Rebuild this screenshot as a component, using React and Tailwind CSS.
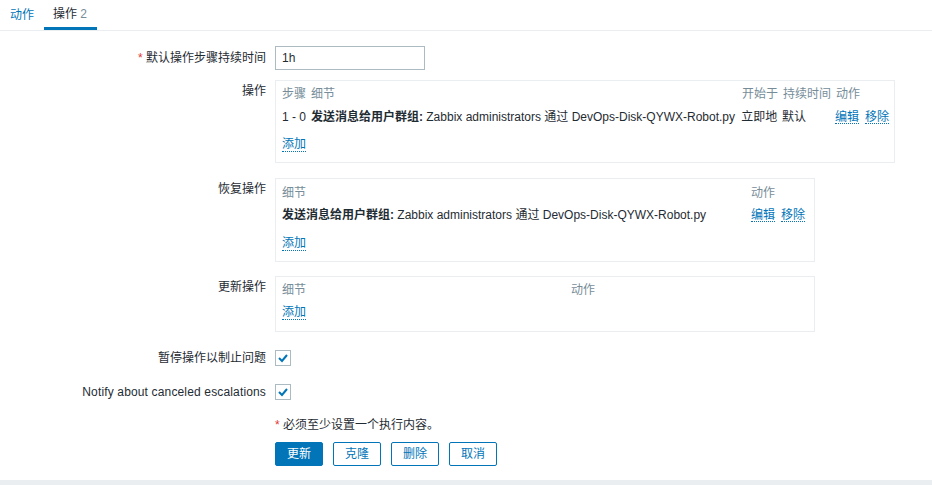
import React from "react";

const Link = ({ children, className = "" }) => (
  <span className={"inline-block leading-[14px] text-[#0275b8] border-b border-dotted border-[#0275b8] " + className}>
    {children}
  </span>
);

const Check = () => (
  <span className="flex h-[16px] w-[16px] items-center justify-center border border-[#acbbc2] bg-white">
    <svg width="12" height="10" viewBox="0 0 12 10">
      <path d="M2 5 L5 8 L10 2" fill="none" stroke="#0275b8" strokeWidth="2" />
    </svg>
  </span>
);

const Label = ({ children, className = "" }) => (
  <div className={"w-[266px] shrink-0 text-right leading-[14px] " + className}>{children}</div>
);

const Detail = () => (
  <>
    <span className="font-bold">发送消息给用户群组:</span> Zabbix administrators 通过 DevOps-Disk-QYWX-Robot.py
  </>
);

export default function App() {
  return (
    <div className="w-[932px] h-[485px] overflow-hidden bg-white text-[12px] text-[#1f2c33] font-['Liberation_Sans','Noto_Sans_CJK_SC',sans-serif]">
      {/* tabs */}
      <div className="flex h-[31px] border-b border-[#ebeef0]">
        <div className="px-[10px] h-[30px] leading-[30px] text-[#0275b8]">动作</div>
        <div className="pl-[9px] pr-[10px] h-[30px] leading-[30px] border-b-[3px] border-[#0275b8]">
          <span className="relative top-[-1px]">操作 <span className="text-[#768d99]">2</span></span>
        </div>
      </div>

      <div className="pt-[15px]">
        {/* default duration */}
        <div className="flex items-center">
          <Label>
            <span className="text-[#e33734]">*</span> 默认操作步骤持续时间
          </Label>
          <div className="ml-[9px] h-[24px] w-[150px] border border-[#acbbc2] px-[6px] leading-[22px]">1h</div>
        </div>

        {/* operations */}
        <div className="mt-[10px] flex items-start">
          <Label className="pt-[4px]">操作</Label>
          <div className="ml-[9px] w-[620px] border border-[#ebeef0] pt-[6px] pb-[10px] pl-[6px] pr-[5px] leading-[14px]">
            <div className="flex h-[14px] text-[#768d99]">
              <div className="w-[29px]">步骤</div>
              <div className="w-[431px]">细节</div>
              <div className="w-[41px]">开始于</div>
              <div className="w-[53px]">持续时间</div>
              <div>动作</div>
            </div>
            <div className="mt-[9px] flex h-[14px] whitespace-nowrap">
              <div className="w-[29px]">1 - 0</div>
              <div className="w-[431px]"><Detail /></div>
              <div className="w-[41px]">立即地</div>
              <div className="w-[53px]">默认</div>
              <div className="flex gap-[6px]">
                <Link>编辑</Link>
                <Link>移除</Link>
              </div>
            </div>
            <div className="mt-[13px]">
              <Link>添加</Link>
            </div>
          </div>
        </div>

        {/* recovery */}
        <div className="mt-[15px] flex items-start">
          <Label className="pt-[4px]">恢复操作</Label>
          <div className="ml-[9px] w-[540px] border border-[#ebeef0] pt-[7px] pb-[10px] pl-[6px] pr-[5px] leading-[14px]">
            <div className="flex h-[14px] text-[#768d99]">
              <div className="w-[469px]">细节</div>
              <div>动作</div>
            </div>
            <div className="mt-[8px] flex h-[14px] whitespace-nowrap">
              <div className="w-[469px]"><Detail /></div>
              <div className="flex gap-[6px]">
                <Link>编辑</Link>
                <Link>移除</Link>
              </div>
            </div>
            <div className="mt-[14px]">
              <Link>添加</Link>
            </div>
          </div>
        </div>

        {/* update */}
        <div className="mt-[14px] flex items-start">
          <Label className="pt-[4px]">更新操作</Label>
          <div className="ml-[9px] w-[540px] border border-[#ebeef0] pt-[6px] pb-[11px] pl-[6px] pr-[5px] leading-[14px]">
            <div className="flex h-[14px] text-[#768d99]">
              <div className="w-[289px]">细节</div>
              <div>动作</div>
            </div>
            <div className="mt-[8px]">
              <Link>添加</Link>
            </div>
          </div>
        </div>

        {/* checkboxes */}
        <div className="mt-[18px] flex items-center">
          <Label>暂停操作以制止问题</Label>
          <div className="ml-[9px]"><Check /></div>
        </div>
        <div className="mt-[18px] flex items-center">
          <Label className="tracking-[0.15px]">Notify about canceled escalations</Label>
          <div className="ml-[9px]"><Check /></div>
        </div>

        {/* note */}
        <div className="mt-[18px] flex">
          <div className="w-[266px] shrink-0" />
          <div className="ml-[9px] leading-[14px]">
            <span className="text-[#e33734]">*</span> 必须至少设置一个执行内容。
          </div>
        </div>

        {/* buttons */}
        <div className="mt-[10px] flex">
          <div className="w-[266px] shrink-0" />
          <div className="ml-[9px] flex gap-[10px]">
            <button className="h-[24px] w-[48px] rounded-[2px] border border-[#0275b8] bg-[#0275b8] text-white leading-[22px]">更新</button>
            <button className="h-[24px] w-[48px] rounded-[2px] border border-[#0275b8] bg-white text-[#0275b8] leading-[22px]">克隆</button>
            <button className="h-[24px] w-[48px] rounded-[2px] border border-[#0275b8] bg-white text-[#0275b8] leading-[22px]">删除</button>
            <button className="h-[24px] w-[48px] rounded-[2px] border border-[#0275b8] bg-white text-[#0275b8] leading-[22px]">取消</button>
          </div>
        </div>

        <div className="mt-[14px] h-[10px] bg-[#ebeef0]" />
      </div>
    </div>
  );
}
